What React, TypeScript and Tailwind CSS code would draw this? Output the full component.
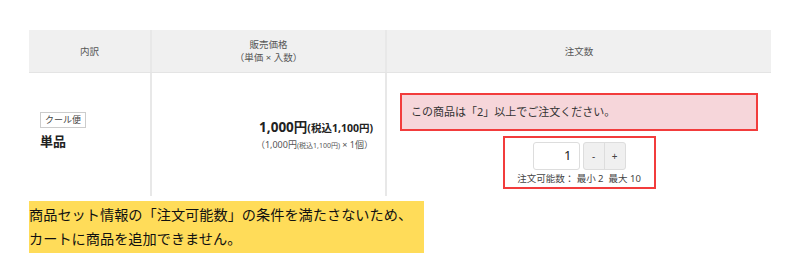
import React from 'react';

const App = () => {
    return (
        <div className="w-[800px] h-[265px] bg-white pt-[30px] pl-[29px]" style={{ fontFamily: '"Noto Sans", "Noto Sans CJK JP", sans-serif' }}>
            <div className="w-[742px]">
                {/* Header */}
                <div className="grid grid-cols-[123px_235px_384px] h-[43px] bg-[#f0f0f0] border-b border-[#e4e4e4] text-[9.5px] text-[#555] leading-[13px]">
                    <div className="flex items-center justify-center border-r-2 border-[#e8e8e8]">内訳</div>
                    <div className="flex flex-col items-center justify-center border-r-2 border-[#e8e8e8]">
                        <span>販売価格</span>
                        <span>（単価 × 入数）</span>
                    </div>
                    <div className="flex items-center justify-center">注文数</div>
                </div>

                {/* Row */}
                <div className="grid grid-cols-[123px_235px_384px] h-[123px]">
                    <div className="flex flex-col justify-center pl-[11px] pb-[8px] border-r-2 border-[#e8e8e8]">
                        <span className="self-start border border-[#ccc] text-[9px] text-[#444] leading-[12px] px-[4px] py-[1px]">クール便</span>
                        <span className="mt-[5px] text-[13px] font-bold text-[#222] leading-[16px]">単品</span>
                    </div>
                    <div className="flex flex-col items-end justify-center pr-[12px] border-r-2 border-[#e8e8e8]">
                        <div className="text-[#222] font-bold leading-[18px]">
                            <span className="text-[13.5px]">1,000円</span>
                            <span className="text-[10.5px]">(税込1,100円)</span>
                        </div>
                        <div className="text-[9px] text-[#555] leading-[12px] mt-[2px]">
                            （1,000円<span className="text-[7px]">(税込1,100円)</span> × 1個）
                        </div>
                    </div>
                    <div className="flex flex-col items-center pt-[20px]">
                        <div className="w-[358px] h-[38px] bg-[#f6d6da] border-2 border-[#f23c3c] flex items-center pl-[9px] text-[11px] text-[#333]">
                            この商品は「2」以上でご注文ください。
                        </div>
                        <div className="mt-[5px] w-[153px] h-[53px] border-2 border-[#f23c3c] flex flex-col items-center pt-[4px]">
                            <div className="flex items-center gap-[3px]">
                                <div className="w-[47px] h-[28px] border border-[#ddd] rounded-[3px] flex items-center justify-end pr-[7px] text-[13px] text-[#222]">1</div>
                                <div className="flex h-[28px] border border-[#ddd] rounded-[3px] bg-[#f0f0f0] text-[10px] text-[#444]">
                                    <span className="w-[21px] flex items-center justify-center border-r border-[#ddd]">-</span>
                                    <span className="w-[20px] flex items-center justify-center">+</span>
                                </div>
                            </div>
                            <div className="mt-[3px] text-[9.5px] text-[#444] leading-[12px] whitespace-nowrap">注文可能数： 最小 2&nbsp;&nbsp;最大 10</div>
                        </div>
                    </div>
                </div>

                {/* Notice */}
                <div className="mt-[5px] w-[395px] h-[52px] bg-[#ffdc59] flex flex-col justify-center text-[14.2px] leading-[24px] text-[#111] whitespace-nowrap">
                    <span>商品セット情報の「注文可能数」の条件を満たさないため、</span>
                    <span>カートに商品を追加できません。</span>
                </div>
            </div>
        </div>
    );
};

export default App;
